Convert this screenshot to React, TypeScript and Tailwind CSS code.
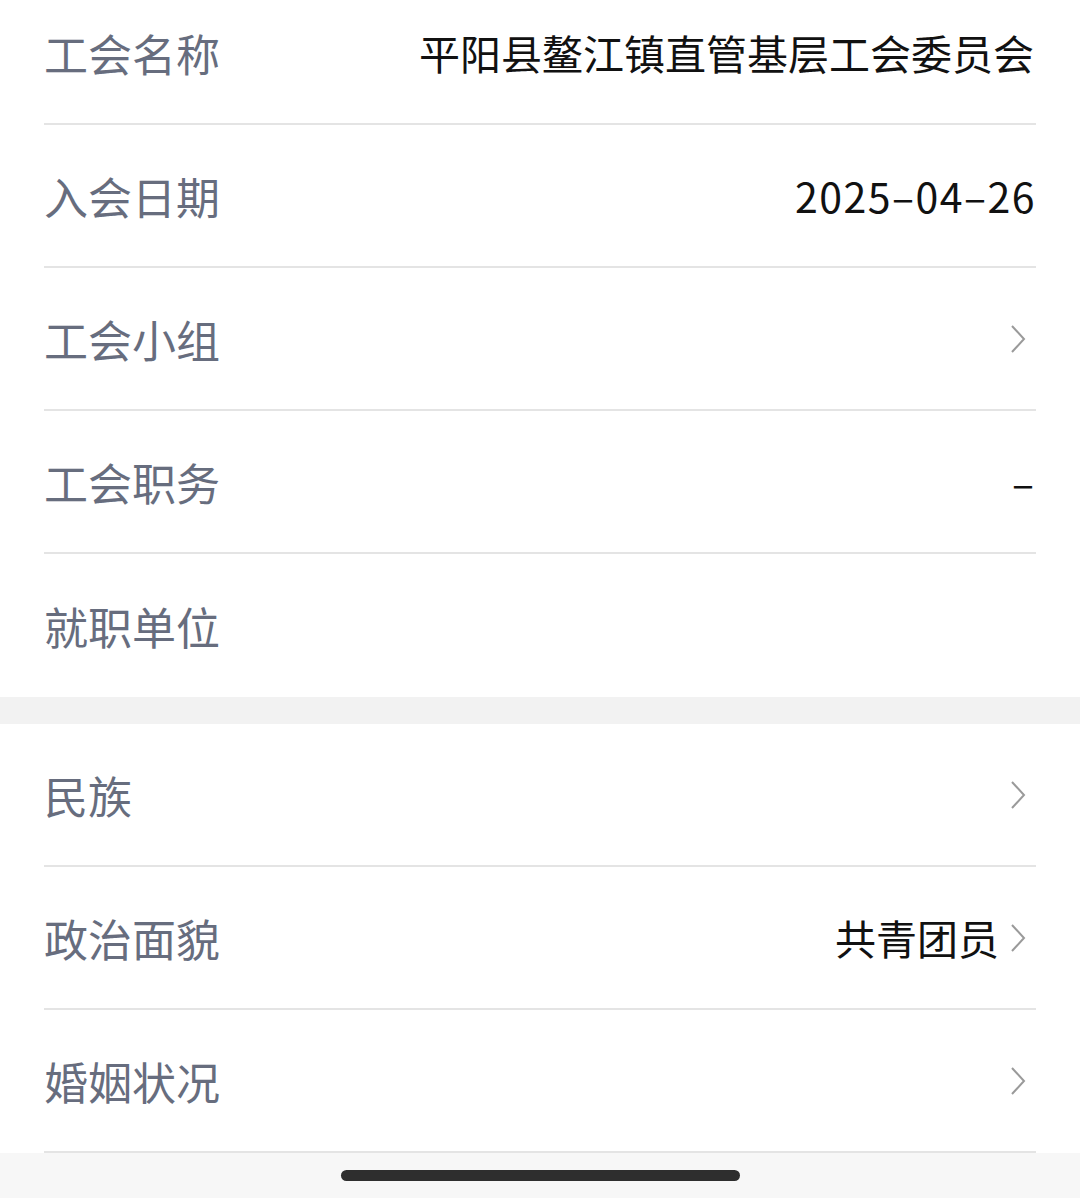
import React from 'react'

const font = { fontFamily: '"Noto Sans CJK SC", "Noto Sans", sans-serif' }

function Chevron() {
  return (
    <svg width="18" height="32" viewBox="0 0 18 32" className="ml-[10px] shrink-0">
      <polyline points="3,3 15,16 3,29" fill="none" stroke="#9a9a9a" strokeWidth="2" />
    </svg>
  )
}

type RowProps = { label: string; value?: string; arrow?: boolean; divider?: boolean; wide?: boolean }

function Row({ label, value, arrow, divider = true, wide }: RowProps) {
  return (
    <div className="px-[44px]">
      <div className={`flex h-[143px] items-center justify-between ${divider ? 'border-b-2 border-[#e4e4e4]' : ''}`}>
        <span className="text-[44px] text-[#676d7e] leading-none">{label}</span>
        <div className="flex items-center pr-[2px]">
          {value && (
            <span className={`text-[41px] text-[#111] leading-none ${wide ? 'tracking-[1.5px] -mr-[2px]' : ''}`}>
              {value}
            </span>
          )}
          {arrow && <Chevron />}
          {arrow && <span className="w-[7px]" />}
        </div>
      </div>
    </div>
  )
}

export default function App() {
  return (
    <div className="w-[1080px] h-[1198px] overflow-hidden bg-[#f7f7f7] flex flex-col" style={font}>
      <div className="bg-white -mt-[18px]">
        <Row label="工会名称" value="平阳县鳌江镇直管基层工会委员会" />
        <Row label="入会日期" value="2025–04–26" wide />
        <Row label="工会小组" arrow />
        <Row label="工会职务" value="–" />
        <Row label="就职单位" divider={false} />
      </div>
      <div className="h-[27px] bg-[#f2f2f2]" />
      <div className="bg-white">
        <Row label="民族" arrow />
        <Row label="政治面貌" value="共青团员" arrow />
        <Row label="婚姻状况" arrow />
      </div>
      <div className="flex flex-1 items-start justify-center pt-[17px]">
        <div className="h-[11px] w-[399px] rounded-full bg-[#2e2e2e]" />
      </div>
    </div>
  )
}
